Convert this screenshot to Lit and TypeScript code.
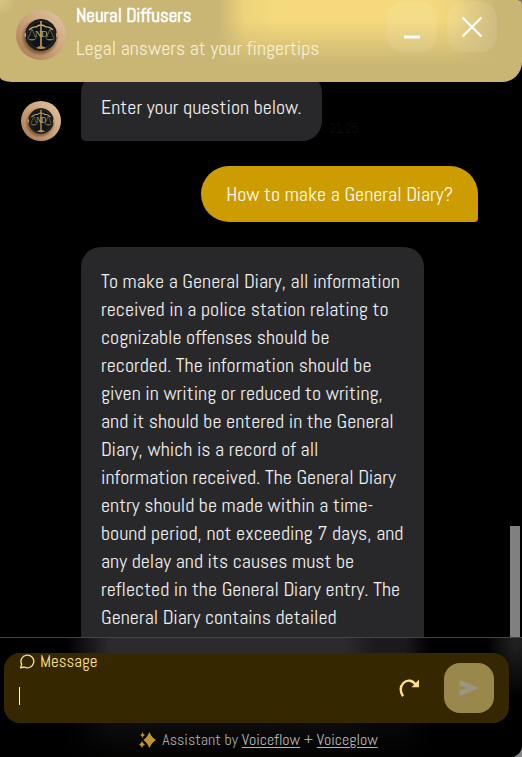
import { LitElement, html, css, svg } from "lit";
import { customElement, property } from "lit/decorators.js";

@customElement("brand-avatar")
class BrandAvatar extends LitElement {
  static styles = css`
    :host { display: block; flex: none; }
    svg { display: block; width: 100%; height: 100%; }
    text { font-family: "Liberation Serif", serif; font-size: 9px; fill: #bfb183; }
  `;

  render() {
    const pan = (x: number) => svg`
      <path d="M${x} 19L${x - 4} 29M${x} 19L${x + 4} 29" stroke="#5f6244" stroke-width="1" fill="none"/>
      <path d="M${x - 4} 29H${x + 4}Q${x} 32 ${x - 4} 29Z" fill="#94753f"/>`;
    return html`
      <svg viewBox="0 0 50 50" role="img" aria-label="Neural Diffusers logo">
        <defs>
          <linearGradient id="skin" x1="1" y1="0" x2="0" y2="1">
            <stop offset="0" stop-color="#e2c6a2" />
            <stop offset=".5" stop-color="#cba27a" />
            <stop offset="1" stop-color="#a8764d" />
          </linearGradient>
          <radialGradient id="shade">
            <stop offset=".75" stop-color="#4a2b18" stop-opacity=".6" />
            <stop offset="1" stop-color="#4a2b18" stop-opacity="0" />
          </radialGradient>
        </defs>
        <circle cx="25" cy="25" r="25" fill="url(#skin)" />
        <circle cx="24" cy="27" r="19" fill="url(#shade)" />
        <circle cx="25" cy="25" r="15.5" fill="#0f161b" stroke="#1d1d1a" stroke-width="1" />
        <circle cx="25" cy="25" r="13.8" fill="none" stroke="#363a35" stroke-width=".7" />
        <path d="M13 20Q17 16 20 17Q25 13 30 17Q33 16 37 20" fill="none" stroke="#d0aa6c" stroke-width="1.3" />
        ${pan(16)}${pan(34)}
        <path d="M25 11V39" fill="none" stroke="#c99c55" stroke-width="1.6" />
        <path d="M20 38Q25 34 30 38Q25 40 20 38Z" fill="#b98a48" />
        <text x="19" y="27">N</text>
        <text x="25" y="27">D</text>
        <path d="M8 25l2-3v6zM42 25l-2-3v6z" fill="#c99c55" />
      </svg>`;
  }
}

@customElement("chat-bubble")
class ChatBubble extends LitElement {
  @property({ type: Boolean, reflect: true }) mine = false;
  @property({ attribute: false }) lines: string[] = [];

  static styles = css`
    :host {
      display: block;
      padding: 20px;
      border-radius: 20px 20px 20px 5px;
      background: #28282a;
      color: #f0f0f0;
      font-size: 20px;
      line-height: 28px;
      white-space: nowrap;
    }
    :host([mine]) {
      align-self: flex-end;
      padding: 14px 25px;
      border-radius: 28px 28px 4px 28px;
      background: #cc9c00;
      color: #fffbf0;
    }
    p { margin: 0; }
  `;

  render() {
    return html`<p>${this.lines.map((line, i) => (i ? html`<br />${line}` : line))}</p>`;
  }
}

@customElement("app-root")
class AppRoot extends LitElement {
  static styles = css`
    :host {
      display: block;
      background: #85858c;
      font-family: "Abel", "Roboto", sans-serif;
    }
    * { box-sizing: border-box; }
    .chat {
      display: flex;
      flex-direction: column;
      height: 100vh;
      overflow: hidden;
      background: #000;
      border-radius: 0 4px 12px 0;
    }
    header {
      position: relative;
      z-index: 1;
      flex: none;
      display: flex;
      align-items: flex-start;
      gap: 10px;
      padding: 0 25px 18px 16px;
      border-radius: 0 4px 20px 12px / 0 4px 20px 5px;
      background:
        radial-gradient(circle at 0 0, #d6c787 0, transparent 16px),
        linear-gradient(transparent 20px, #c9b675 66px),
        linear-gradient(90deg, #c9b675 218px, #efd47c 245px, #f5d97c 275px, #f5d97c 430px, #efd47c 455px, #c9b675 496px);
    }
    header brand-avatar { width: 50px; height: 50px; margin-top: 10px; }
    .titles { flex: 1; white-space: nowrap; }
    h1, .titles p { margin: 0; line-height: 32px; }
    h1 { font-size: 19px; color: #fff; }
    .titles p { font-size: 20px; color: #f7efd6; }
    .actions { display: flex; gap: 10px; padding-top: 2px; }
    button {
      display: grid;
      place-items: center;
      width: 50px;
      height: 50px;
      padding: 0;
      border: 0;
      border-radius: 16px;
      background: rgba(255, 255, 255, 0.09);
    }
    button svg, .credit svg, label svg { display: block; }
    .body {
      flex: 1;
      min-height: 0;
      display: flex;
      overflow: hidden;
      padding-right: 2px;
    }
    .log {
      flex: 1;
      display: flex;
      flex-direction: column;
      gap: 25px;
      margin-top: -9px;
      padding: 0 32px 0 21px;
    }
    .row { display: flex; gap: 20px; align-items: flex-end; }
    .row brand-avatar { width: 40px; height: 40px; }
    .long { align-items: flex-start; padding-left: 60px; flex: 1; }
    .long chat-bubble { width: 343px; min-height: 100%; border-radius: 20px 20px 0 0; }
    time { align-self: flex-end; margin-left: -12px; font-size: 13px; line-height: 24px; color: #0d0d0d; }
    .thumb { width: 10px; height: 20%; align-self: flex-end; background: #808080; }
    footer {
      flex: none;
      padding: 15px 13px 5px 4px;
      border-top: 1px solid #5c4700;
      background:
        radial-gradient(ellipse 30px 60px at 516px 0, #242424, transparent),
        linear-gradient(90deg, #000 66px, transparent 110px, transparent 345px, rgba(0, 0, 0, 0.4) 375px, rgba(0, 0, 0, 0.4) 405px, #000 430px),
        linear-gradient(#2b2b2d 0, #2b2b2d 14px, #0b0b0b 90px, #030201 119px);
    }
    .composer {
      display: flex;
      align-items: center;
      height: 70px;
      padding: 0 15px;
      border-radius: 16px;
      background: #352800;
    }
    .field { flex: 1; align-self: stretch; display: flex; flex-direction: column; }
    label {
      display: flex;
      align-items: center;
      gap: 5px;
      height: 16px;
      color: #ffe28d;
      font-size: 17px;
    }
    .entry { display: flex; align-items: center; height: 54px; }
    .caret { width: 1px; height: 18px; background: #fff4cf; }
    input {
      flex: 1;
      min-width: 0;
      border: 0;
      outline: 0;
      background: transparent;
      color: #fff;
      font: inherit;
      font-size: 20px;
    }
    .restart { background: none; }
    .send { margin-left: 10px; background: #9a874b; }
    .credit {
      display: flex;
      align-items: center;
      justify-content: center;
      gap: 6px;
      margin: 5px 0 0 4px;
      color: #a8a8a8;
      font-size: 16px;
      line-height: 24px;
    }
    a { color: #b4b4b4; text-underline-offset: 2px; }
  `;

  private answer = [
    "To make a General Diary, all information",
    "received in a police station relating to",
    "cognizable offenses should be",
    "recorded. The information should be",
    "given in writing or reduced to writing,",
    "and it should be entered in the General",
    "Diary, which is a record of all",
    "information received. The General Diary",
    "entry should be made within a time-",
    "bound period, not exceeding 7 days, and",
    "any delay and its causes must be",
    "reflected in the General Diary entry. The",
    "General Diary contains detailed",
  ];

  render() {
    return html`
      <main class="chat">
        <header>
          <brand-avatar></brand-avatar>
          <div class="titles">
            <h1>Neural Diffusers</h1>
            <p>Legal answers at your fingertips</p>
          </div>
          <div class="actions">
            <button aria-label="Minimize">
              <svg width="50" height="50"><path d="M17 35H33" stroke="#fff" stroke-width="3" /></svg>
            </button>
            <button aria-label="Close">
              <svg width="50" height="50"><path d="M15.5 15.5L34.5 34.5M34.5 15.5L15.5 34.5" stroke="#fff" stroke-width="2.2" /></svg>
            </button>
          </div>
        </header>
        <section class="body">
          <div class="log">
            <div class="row">
              <brand-avatar></brand-avatar>
              <chat-bubble .lines=${["Enter your question below."]}></chat-bubble>
              <time>21:25</time>
            </div>
            <chat-bubble mine .lines=${["How to make a General Diary?"]}></chat-bubble>
            <div class="row long">
              <chat-bubble .lines=${this.answer}></chat-bubble>
            </div>
          </div>
          <div class="thumb"></div>
        </section>
        <footer>
          <div class="composer">
            <div class="field">
              <label for="message">
                <svg width="16" height="16" viewBox="0 0 16 16" fill="none" stroke="currentColor" stroke-width="1.3" stroke-linejoin="round">
                  <path d="M1.6 14.8L2.7 11.4A6.4 6.4 0 1 1 5.2 14Z" />
                </svg>
                Message
              </label>
              <div class="entry">
                <span class="caret"></span>
                <input id="message" type="text" autocomplete="off" />
              </div>
            </div>
            <button class="restart" aria-label="Restart">
              <svg width="22" height="20" viewBox="0 0 22 20">
                <path d="M5 18.3C2 14 1.8 8.5 5.4 5C9.5 1 14.8 2.4 18 7" fill="none" stroke="#ffe08a" stroke-width="2.4" />
                <path d="M21 1.5V9.3H13.6Z" fill="#ffe08a" />
              </svg>
            </button>
            <button class="send" aria-label="Send">
              <svg width="20" height="18" viewBox="0 0 20 18">
                <path d="M.5.5L19.5 9L.5 17.5V11.2L10 9L.5 6.8Z" fill="#9c9584" />
              </svg>
            </button>
          </div>
          <div class="credit">
            <svg width="17" height="16" viewBox="0 0 17 16" fill="#c29430">
              <path d="M10.4 0Q12.8 5.6 17 8Q12.8 10.4 10.4 16Q8 10.4 4.4 8Q8 5.6 10.4 0Z" />
              <path d="M3.6 0Q4 2.6 6 3.1Q4 3.6 3.6 6.2Q3.2 3.6 1.2 3.1Q3.2 2.6 3.6 0Z" />
              <path d="M3 9Q3.7 11.8 6 12.5Q3.7 13.2 3 16Q2.3 13.2 0 12.5Q2.3 11.8 3 9Z" />
            </svg>
            <span>Assistant by <a href="#voiceflow">Voiceflow</a> + <a href="#voiceglow">Voiceglow</a></span>
          </div>
        </footer>
      </main>`;
  }
}
